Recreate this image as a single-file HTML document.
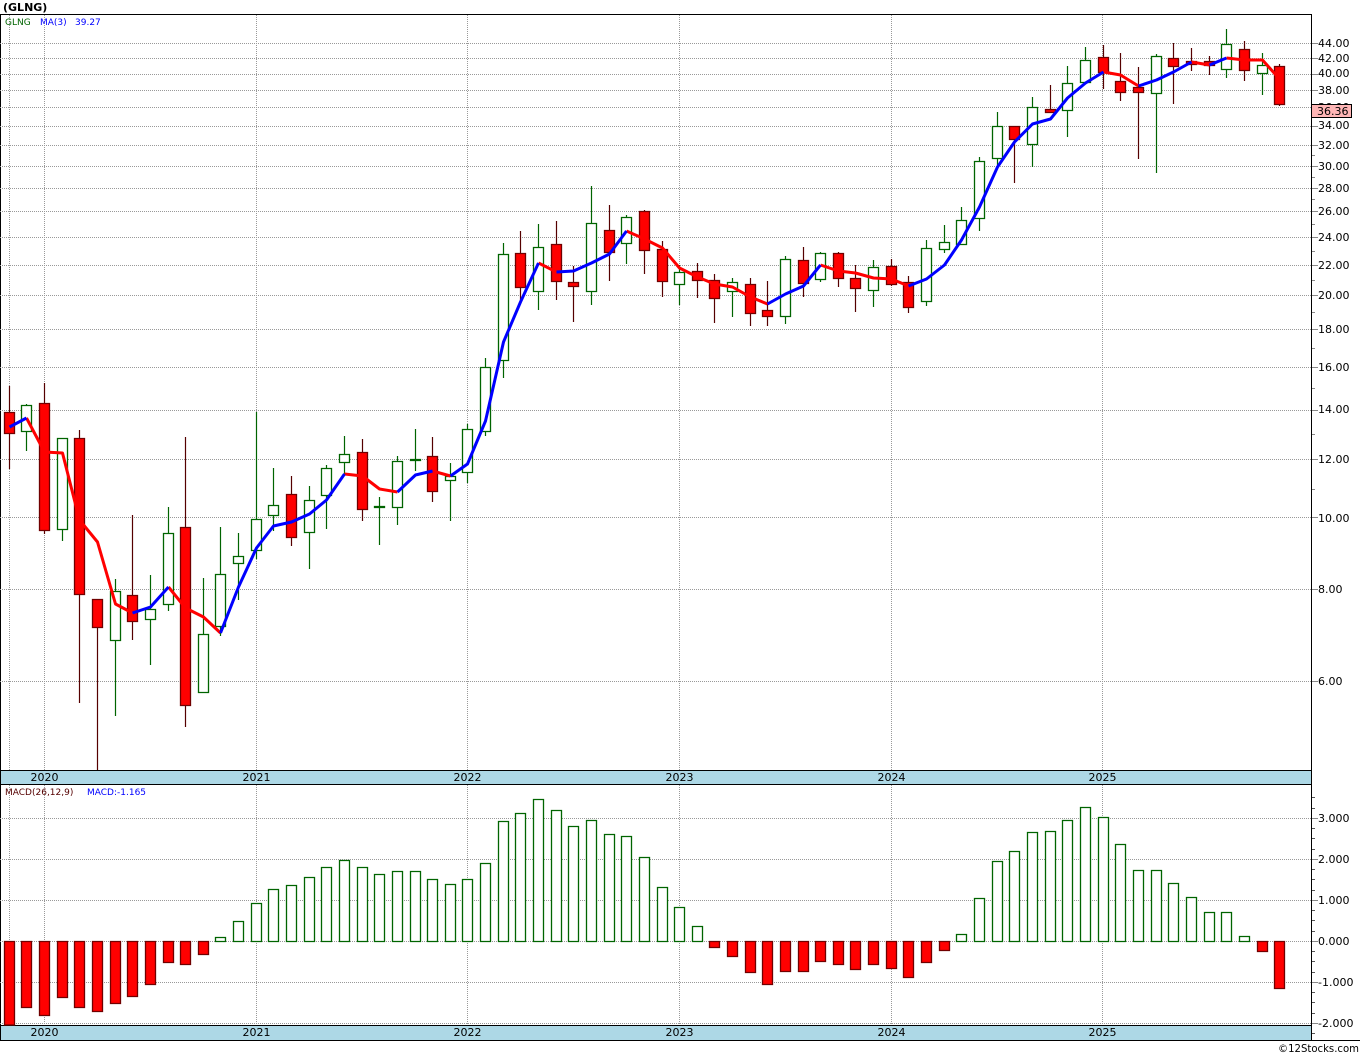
<!DOCTYPE html>
<html><head><meta charset="utf-8"><title>GLNG</title>
<style>
html,body{margin:0;padding:0;background:#fff;width:1360px;height:1056px;overflow:hidden}
svg{display:block}
text{font-family:"DejaVu Sans",sans-serif;font-size:11px;fill:#000}
.l{font-size:9px}
.grid path{stroke:#999;stroke-width:1;stroke-dasharray:1 1;fill:none}
.c{shape-rendering:crispEdges}
.w{stroke-width:1.2}
.b{stroke-width:1.3}
.ma{fill:none;stroke-width:3;stroke-linejoin:round;stroke-linecap:butt}
</style></head><body>
<svg width="1360" height="1056" viewBox="0 0 1360 1056" xmlns="http://www.w3.org/2000/svg">
<rect width="1360" height="1056" fill="#fff"/>
<g class="c">
<path d="M0.5 14V1040M1311.5 14V1040M0 14.5H1311M0 770.5H1311M0 784.5H1311M0 1025.5H1311M0 1040.5H1360" stroke="#000" fill="none"/>
<rect x="1" y="771" width="1310" height="13" fill="#ADD8E6"/>
<rect x="1" y="1026" width="1310" height="14" fill="#ADD8E6"/>
</g>
<g class="grid c">
<path d="M9.5 15V770M44.5 15V770M256.5 15V770M467.5 15V770M679.5 15V770M891.5 15V770M1102.5 15V770M9.5 785V1025M44.5 785V1025M256.5 785V1025M467.5 785V1025M679.5 785V1025M891.5 785V1025M1102.5 785V1025"/>
<path d="M0 43.5H1311M0 58.5H1311M0 74.5H1311M0 90.5H1311M0 107.5H1311M0 126.5H1311M0 145.5H1311M0 166.5H1311M0 188.5H1311M0 211.5H1311M0 237.5H1311M0 265.5H1311M0 295.5H1311M0 329.5H1311M0 367.5H1311M0 410.5H1311M0 459.5H1311M0 517.5H1311M0 589.5H1311M0 681.5H1311M0 818.5H1311M0 859.5H1311M0 900.5H1311M0 941.5H1311M0 982.5H1311M0 1023.5H1311"/>
</g>
<g class="c" fill="none">
<path stroke="#888" d="M1312 43.5H1318M1312 58.5H1318M1312 74.5H1318M1312 90.5H1318M1312 126.5H1318M1312 145.5H1318M1312 166.5H1318M1312 188.5H1318M1312 211.5H1318M1312 237.5H1318M1312 265.5H1318M1312 295.5H1318M1312 329.5H1318M1312 367.5H1318M1312 410.5H1318M1312 459.5H1318M1312 517.5H1318M1312 589.5H1318M1312 681.5H1318M1312 155.5H1315M1312 177.5H1315M1312 199.5H1315M1312 224.5H1315M1312 251.5H1315M1312 280.5H1315M1312 312.5H1315M1312 348.5H1315M1312 388.5H1315M1312 434.5H1315M1312 489.5H1315M1312 818.5H1318M1312 859.5H1318M1312 900.5H1318M1312 941.5H1318M1312 982.5H1318M1312 1023.5H1318"/>
<path stroke="#555" d="M1312 797.5H1315M1312 808.5H1315M1312 828.5H1315M1312 838.5H1315M1312 849.5H1315M1312 869.5H1315M1312 879.5H1315M1312 890.5H1315M1312 910.5H1315M1312 920.5H1315M1312 931.5H1315M1312 951.5H1315M1312 961.5H1315M1312 972.5H1315M1312 992.5H1315M1312 1002.5H1315M1312 1013.5H1315M1312 1033.5H1315"/>
</g>
<g fill="none" class="w">
<!-- wicks -->
<path stroke="#006400" d="M26.5 404V451M62.5 438V541M115.5 579V716M150.5 575V665M168.5 507V611M203.5 578V635M220.5 527V636M238.5 533V600M256.5 412V559M273.5 468V531M309.5 486V569M326.5 465V529M344.5 436V474M379.5 497V545M397.5 456V525M415.5 429V471M450.5 463V521M467.5 424V483M485.5 358V436M503.5 243V378M538.5 224V310M591.5 186V305M626.5 215V264M679.5 265V305M732.5 278V317M785.5 256V324M820.5 252V282M873.5 260V307M926.5 240V306M944.5 225V253M961.5 207V245M979.5 157V231M997.5 112V165M1032.5 97V167M1067.5 66V137M1085.5 47V83M1156.5 54V173M1226.5 29V78M1262.5 53V95"/>
<path stroke="#550000" d="M9.5 386V469M44.5 383V534M79.5 430V703M97.5 599V770M132.5 515V640M185.5 437V727M291.5 476V546M362.5 439V521M432.5 437V502M520.5 231V300M556.5 221V300M573.5 266V322M609.5 205V281M644.5 210V274M662.5 241V297M697.5 263V298M714.5 274V323M750.5 278V326M767.5 281V326M803.5 247V297M838.5 252V287M855.5 265V312M891.5 259V286M908.5 276V313M1014.5 126V183M1050.5 85V113M1103.5 45V89M1120.5 53V101M1138.5 67V159M1173.5 43V104M1191.5 48V71M1209.5 56V75M1244.5 41V81M1279.5 64V106"/>
</g>
<g class="b">
<!-- bodies -->
<path fill="#fff" stroke="#006400" d="M21.5 405.5h10V431.5h-10zM57.5 438.5h10V529.5h-10zM110.5 591.5h10V640.5h-10zM145.5 609.5h10V619.5h-10zM163.5 533.5h10V604.5h-10zM198.5 634.5h10V692.5h-10zM215.5 574.5h10V626.5h-10zM233.5 556.5h10V563.5h-10zM251.5 519.5h10V550.5h-10zM268.5 505.5h10V515.5h-10zM304.5 500.5h10V532.5h-10zM321.5 468.5h10V495.5h-10zM339.5 454.5h10V462.5h-10zM374.5 506.5h10V507.5h-10zM392.5 461.5h10V507.5h-10zM410.5 459.5h10V460.5h-10zM445.5 476.5h10V480.5h-10zM462.5 429.5h10V472.5h-10zM480.5 367.5h10V431.5h-10zM498.5 254.5h10V360.5h-10zM533.5 247.5h10V291.5h-10zM586.5 223.5h10V291.5h-10zM621.5 217.5h10V243.5h-10zM674.5 272.5h10V284.5h-10zM727.5 282.5h10V291.5h-10zM780.5 259.5h10V316.5h-10zM815.5 253.5h10V279.5h-10zM868.5 267.5h10V290.5h-10zM921.5 248.5h10V301.5h-10zM939.5 242.5h10V249.5h-10zM956.5 220.5h10V244.5h-10zM974.5 161.5h10V218.5h-10zM992.5 126.5h10V158.5h-10zM1027.5 107.5h10V144.5h-10zM1062.5 83.5h10V110.5h-10zM1080.5 60.5h10V82.5h-10zM1151.5 56.5h10V93.5h-10zM1221.5 44.5h10V69.5h-10zM1257.5 65.5h10V73.5h-10z"/>
<path fill="#f00" stroke="#700000" d="M4.5 412.5h10V433.5h-10zM39.5 403.5h10V530.5h-10zM74.5 438.5h10V594.5h-10zM92.5 599.5h10V627.5h-10zM127.5 595.5h10V621.5h-10zM180.5 527.5h10V705.5h-10zM286.5 494.5h10V537.5h-10zM357.5 452.5h10V509.5h-10zM427.5 456.5h10V491.5h-10zM515.5 253.5h10V287.5h-10zM551.5 244.5h10V281.5h-10zM568.5 282.5h10V286.5h-10zM604.5 230.5h10V252.5h-10zM639.5 211.5h10V250.5h-10zM657.5 249.5h10V281.5h-10zM692.5 271.5h10V280.5h-10zM709.5 280.5h10V298.5h-10zM745.5 284.5h10V313.5h-10zM762.5 310.5h10V316.5h-10zM798.5 260.5h10V283.5h-10zM833.5 253.5h10V278.5h-10zM850.5 278.5h10V288.5h-10zM886.5 266.5h10V284.5h-10zM903.5 282.5h10V307.5h-10zM1009.5 126.5h10V139.5h-10zM1045.5 109.5h10V112.5h-10zM1098.5 57.5h10V72.5h-10zM1115.5 81.5h10V92.5h-10zM1133.5 87.5h10V92.5h-10zM1168.5 58.5h10V66.5h-10zM1186.5 61.5h10V64.5h-10zM1204.5 61.5h10V65.5h-10zM1239.5 49.5h10V70.5h-10zM1274.5 66.5h10V104.5h-10z"/>
<!-- MACD -->
<path fill="#fff" stroke="#006400" d="M215.5 937.5h10V941.5h-10zM233.5 921.5h10V941.5h-10zM251.5 903.5h10V941.5h-10zM268.5 889.5h10V941.5h-10zM286.5 885.5h10V941.5h-10zM304.5 877.5h10V941.5h-10zM321.5 867.5h10V941.5h-10zM339.5 860.5h10V941.5h-10zM357.5 867.5h10V941.5h-10zM374.5 874.5h10V941.5h-10zM392.5 871.5h10V941.5h-10zM410.5 871.5h10V941.5h-10zM427.5 879.5h10V941.5h-10zM445.5 884.5h10V941.5h-10zM462.5 879.5h10V941.5h-10zM480.5 863.5h10V941.5h-10zM498.5 821.5h10V941.5h-10zM515.5 813.5h10V941.5h-10zM533.5 799.5h10V941.5h-10zM551.5 810.5h10V941.5h-10zM568.5 826.5h10V941.5h-10zM586.5 820.5h10V941.5h-10zM604.5 834.5h10V941.5h-10zM621.5 836.5h10V941.5h-10zM639.5 857.5h10V941.5h-10zM657.5 887.5h10V941.5h-10zM674.5 907.5h10V941.5h-10zM692.5 926.5h10V941.5h-10zM956.5 934.5h10V941.5h-10zM974.5 898.5h10V941.5h-10zM992.5 861.5h10V941.5h-10zM1009.5 851.5h10V941.5h-10zM1027.5 832.5h10V941.5h-10zM1045.5 831.5h10V941.5h-10zM1062.5 820.5h10V941.5h-10zM1080.5 807.5h10V941.5h-10zM1098.5 817.5h10V941.5h-10zM1115.5 844.5h10V941.5h-10zM1133.5 870.5h10V941.5h-10zM1151.5 870.5h10V941.5h-10zM1168.5 883.5h10V941.5h-10zM1186.5 897.5h10V941.5h-10zM1204.5 912.5h10V941.5h-10zM1221.5 912.5h10V941.5h-10zM1239.5 936.5h10V941.5h-10z"/>
<path fill="#f00" stroke="#700000" d="M4.5 941.5h10V1025h-10zM21.5 941.5h10V1007.5h-10zM39.5 941.5h10V1015.5h-10zM57.5 941.5h10V997.5h-10zM74.5 941.5h10V1007.5h-10zM92.5 941.5h10V1011.5h-10zM110.5 941.5h10V1003.5h-10zM127.5 941.5h10V996.5h-10zM145.5 941.5h10V984.5h-10zM163.5 941.5h10V962.5h-10zM180.5 941.5h10V964.5h-10zM198.5 941.5h10V954.5h-10zM709.5 941.5h10V947.5h-10zM727.5 941.5h10V956.5h-10zM745.5 941.5h10V972.5h-10zM762.5 941.5h10V984.5h-10zM780.5 941.5h10V971.5h-10zM798.5 941.5h10V971.5h-10zM815.5 941.5h10V961.5h-10zM833.5 941.5h10V964.5h-10zM850.5 941.5h10V969.5h-10zM868.5 941.5h10V964.5h-10zM886.5 941.5h10V968.5h-10zM903.5 941.5h10V977.5h-10zM921.5 941.5h10V962.5h-10zM939.5 941.5h10V950.5h-10zM1257.5 941.5h10V951.5h-10zM1274.5 941.5h10V988.5h-10z"/>
</g>
<!-- moving average -->
<g class="ma">
<polyline stroke="#f00" points="26.5,418 44.5,452 62.5,453 79.5,520 97.5,542 115.5,604 132.5,613"/>
<polyline stroke="#f00" points="168.5,587 185.5,608 203.5,617 220.5,633"/>
<polyline stroke="#f00" points="344.5,474 362.5,476 379.5,489 397.5,492"/>
<polyline stroke="#f00" points="432.5,471 450.5,476"/>
<polyline stroke="#f00" points="538.5,263 556.5,272"/>
<polyline stroke="#f00" points="626.5,231 644.5,239 662.5,248 679.5,268 697.5,277 714.5,284 732.5,287 750.5,297 767.5,304"/>
<polyline stroke="#f00" points="820.5,265 838.5,271 855.5,273 873.5,278 891.5,279 908.5,286"/>
<polyline stroke="#f00" points="1103.5,72 1120.5,75 1138.5,86"/>
<polyline stroke="#f00" points="1191.5,62 1209.5,65"/>
<polyline stroke="#f00" points="1226.5,58 1244.5,60 1262.5,60 1279.5,79"/>
<polyline stroke="#00f" points="9.5,427 26.5,418"/>
<polyline stroke="#00f" points="132.5,613 150.5,607 168.5,587"/>
<polyline stroke="#00f" points="220.5,633 238.5,587 256.5,548 273.5,526 291.5,522 309.5,514 326.5,500 344.5,474"/>
<polyline stroke="#00f" points="397.5,492 415.5,475 432.5,471"/>
<polyline stroke="#00f" points="450.5,476 467.5,464 485.5,421 503.5,342 520.5,302 538.5,263"/>
<polyline stroke="#00f" points="556.5,272 573.5,271 591.5,263 609.5,254 626.5,231"/>
<polyline stroke="#00f" points="767.5,304 785.5,294 803.5,286 820.5,265"/>
<polyline stroke="#00f" points="908.5,286 926.5,279 944.5,265 961.5,240 979.5,207 997.5,167 1014.5,142 1032.5,124 1050.5,119 1067.5,98 1085.5,83 1103.5,72"/>
<polyline stroke="#00f" points="1138.5,86 1156.5,80 1173.5,72 1191.5,62"/>
<polyline stroke="#00f" points="1209.5,65 1226.5,58"/>
</g>
<!-- labels -->
<text x="3" y="11" style="font-weight:bold">(GLNG)</text>
<text class="l" x="5" y="25" style="fill:#006400">GLNG</text>
<text class="l" x="40" y="25" style="fill:#00f">MA(3)</text>
<text class="l" x="75" y="25" style="fill:#00f">39.27</text>
<text class="l" x="5" y="795" style="fill:#500">MACD(26,12,9)</text>
<text class="l" x="87" y="795" style="fill:#00f">MACD:-1.165</text>
<g text-anchor="middle">
<text x="44.5" y="781">2020</text><text x="256.5" y="781">2021</text><text x="467.5" y="781">2022</text><text x="679.5" y="781">2023</text><text x="891.5" y="781">2024</text><text x="1102.5" y="781">2025</text>
<text x="44.5" y="1036">2020</text><text x="256.5" y="1036">2021</text><text x="467.5" y="1036">2022</text><text x="679.5" y="1036">2023</text><text x="891.5" y="1036">2024</text><text x="1102.5" y="1036">2025</text>
</g>
<g>
<text x="1318" y="47">44.00</text><text x="1318" y="62">42.00</text><text x="1318" y="77">40.00</text><text x="1318" y="94">38.00</text><text x="1318" y="111">36.00</text><text x="1318" y="129">34.00</text><text x="1318" y="149">32.00</text><text x="1318" y="170">30.00</text><text x="1318" y="192">28.00</text><text x="1318" y="215">26.00</text><text x="1318" y="241">24.00</text><text x="1318" y="269">22.00</text><text x="1318" y="299">20.00</text><text x="1318" y="333">18.00</text><text x="1318" y="371">16.00</text><text x="1318" y="413">14.00</text><text x="1318" y="463">12.00</text><text x="1318" y="522">10.00</text><text x="1318" y="593">8.00</text><text x="1318" y="685">6.00</text>
<text x="1318" y="822">3.000</text><text x="1318" y="863">2.000</text><text x="1318" y="904">1.000</text><text x="1318" y="945">0.000</text><text x="1318" y="986">-1.000</text><text x="1318" y="1027">-2.000</text>
</g>
<rect class="c" x="1311.5" y="104.5" width="40" height="13" fill="#ffb6b6" stroke="#000"/>
<text x="1317" y="115">36.36</text>
<text x="1278" y="1052" textLength="81" lengthAdjust="spacingAndGlyphs">©12Stocks.com</text>
</svg>
</body></html>
